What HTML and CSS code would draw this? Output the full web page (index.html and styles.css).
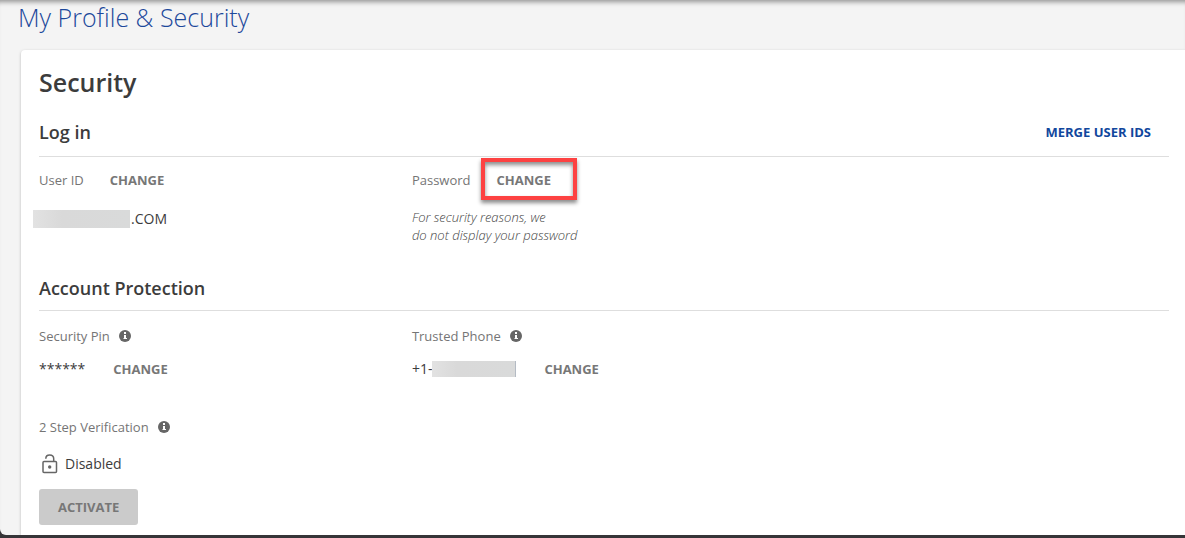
FILE: index.html
```html
<!DOCTYPE html>
<html lang="en">
<head>
  <meta charset="UTF-8">
  <meta name="viewport" content="width=device-width, initial-scale=1.0">
  <title>My Profile &amp; Security</title>
  <link rel="stylesheet" href="styles.css">
</head>
<body>
  <main class="page">
    <h1 class="page-title">My Profile &amp; Security</h1>

    <div class="card">
      <h2 class="card-title">Security</h2>

      <section class="section">
        <div class="section-head login-head">
          <h3 class="section-title">Log in</h3>
          <a class="merge-link" href="#">MERGE USER IDS</a>
        </div>
        <div class="fields login-fields">
          <div class="field">
            <div class="row">
              <span class="label label-wide">User ID</span>
              <button class="change" type="button" aria-label="Change user ID">CHANGE</button>
            </div>
            <div class="value user-id"><span class="redacted redacted-id"></span>.COM</div>
          </div>
          <div class="field">
            <div class="row">
              <span class="label label-wide">Password</span>
              <span class="marked">
                <button class="change" type="button" aria-label="Change password">CHANGE</button>
                <span class="highlight"></span>
              </span>
            </div>
            <p class="note">For security reasons, we<br>do not display your password</p>
          </div>
        </div>
      </section>

      <section class="section">
        <div class="section-head">
          <h3 class="section-title">Account Protection</h3>
        </div>
        <div class="fields">
          <div class="field">
            <div class="row">
              <span class="label">Security Pin</span>
              <button class="info" type="button" aria-label="About security pin">
                <svg viewBox="0 0 12 12"><circle cx="6" cy="6" r="6" fill="#666"/><path d="M5 2h2v2H5zM5 5h2v3h1v1H4.500V8H5z" fill="#fff"/></svg>
              </button>
            </div>
            <div class="row value-row">
              <span class="value">******</span>
              <button class="change" type="button" aria-label="Change security pin">CHANGE</button>
            </div>
          </div>
          <div class="field">
            <div class="row">
              <span class="label">Trusted Phone</span>
              <button class="info" type="button" aria-label="About trusted phone">
                <svg viewBox="0 0 12 12"><circle cx="6" cy="6" r="6" fill="#666"/><path d="M5 2h2v2H5zM5 5h2v3h1v1H4.500V8H5z" fill="#fff"/></svg>
              </button>
            </div>
            <div class="row value-row">
              <span class="value phone">+1-<span class="redacted redacted-phone"></span></span>
              <button class="change" type="button" aria-label="Change trusted phone">CHANGE</button>
            </div>
          </div>
        </div>

        <div class="two-step">
          <div class="row">
            <span class="label">2 Step Verification</span>
            <button class="info" type="button" aria-label="About 2 step verification">
              <svg viewBox="0 0 12 12"><circle cx="6" cy="6" r="6" fill="#666"/><path d="M5 2h2v2H5zM5 5h2v3h1v1H4.500V8H5z" fill="#fff"/></svg>
            </button>
          </div>
          <div class="status">
            <svg class="lock" viewBox="0 0 16 20" fill="none" stroke="#666" stroke-width="1.5"><rect x="1" y="7.5" width="13.5" height="11" rx="1"/><path d="M3.8 4.7C3.8 2.4 5.5 1 7.7 1s4 1.5 4 3.8v2.7"/><circle cx="7.7" cy="13" r="1.7" fill="#666" stroke="none"/></svg>
            <span class="value">Disabled</span>
          </div>
          <button class="activate" type="button" disabled>ACTIVATE</button>
        </div>
      </section>
    </div>
  </main>
</body>
</html>
```

FILE: styles.css
```css
* {
  box-sizing: border-box;
}
body {
  display: flex;
  flex-direction: column;
  min-height: 100vh;
  margin: 0;
  padding-bottom: 3px;
  background-color: #363538;
  color: #3c3c3c;
  font-family: "Open Sans", sans-serif;
  font-size: 14px;
  line-height: 20px;
}
h1, h2, h3, p {
  margin: 0;
}
button {
  padding: 0;
  border: 0;
  background: none;
  font: inherit;
  cursor: pointer;
}

/* Page */
.page {
  flex: 1;
  display: flex;
  flex-direction: column;
  background-color: #f4f4f4;
  border-radius: 0 0 0 6px;
  box-shadow: inset 0 6px 5px -4px rgba(0, 0, 0, 0.4);
}
.page-title {
  padding: 1px 18px 17px;
  color: #1c489b;
  font-size: 25px;
  font-weight: 300;
  line-height: 32px;
}
.card {
  flex: 1;
  margin-left: 21px;
  padding: 15px 16px 10px 18px;
  background-color: #fff;
  border-radius: 4px 0 0 0;
  box-shadow: 0 1px 3px rgba(0, 0, 0, 0.25);
  clip-path: inset(-4px 0 0 -4px);
}
.card-title {
  margin-bottom: 17px;
  font-size: 25px;
  font-weight: 600;
  line-height: 34px;
}

/* Sections */
.section-head {
  display: flex;
  justify-content: space-between;
  align-items: center;
  height: 41px;
  padding-bottom: 4px;
  border-bottom: 1px solid #dedede;
}
.login-head {
  padding: 0 18px 8px 0;
}
.section-title {
  font-size: 18px;
  font-weight: 600;
}
.merge-link {
  color: #11479d;
  font-size: 13px;
  font-weight: 700;
  text-decoration: none;
}
.fields {
  display: grid;
  grid-template-columns: 33% 1fr;
  padding-top: 15px;
}
.login-fields {
  min-height: 113px;
  padding-top: 13px;
}
.row {
  display: flex;
  align-items: center;
}
.label {
  margin-right: 9px;
  color: #757575;
  font-size: 13px;
}
.label-wide {
  margin-right: 26px;
}
.value {
  color: #3c3c3c;
}
.value-row {
  gap: 28px;
  margin-top: 13px;
}
.change {
  color: #777;
  font-size: 13px;
  font-weight: 700;
}
.user-id {
  display: flex;
  align-items: center;
  margin: 19px 0 0 -6px;
}
.redacted {
  background: linear-gradient(to right, #e2e2e2, #d9d9d9 30%, #d9dada);
}
.redacted-id {
  width: 97px;
  height: 18px;
  margin-right: 1px;
}
.phone {
  display: flex;
  align-items: center;
}
.redacted-phone {
  width: 84px;
  height: 16px;
  border-right: 1px solid #b4bbc4;
}
.note {
  margin-top: 18px;
  color: #444;
  font-size: 13px;
  font-style: italic;
  font-weight: 300;
  line-height: 18px;
}
.marked {
  position: relative;
}
.highlight {
  position: absolute;
  inset: -12px -26px -10px -16px;
  border: 4px solid #fd4242;
  box-shadow: 0 3px 4px rgba(0, 0, 0, 0.45), inset 0 3px 4px rgba(0, 0, 0, 0.45);
  pointer-events: none;
}
.info {
  width: 12px;
  height: 12px;
}
.info svg,
.lock {
  display: block;
}

/* 2 step verification */
.two-step {
  padding-top: 38px;
}
.status {
  display: flex;
  align-items: center;
  gap: 7px;
  margin: 17px 0 15px 3px;
}
.lock {
  width: 16px;
  height: 20px;
}
.activate {
  height: 36px;
  padding: 0 19px;
  background-color: #cbcbcb;
  border-radius: 3px;
  color: #777;
  font-size: 13px;
  font-weight: 700;
}
```
